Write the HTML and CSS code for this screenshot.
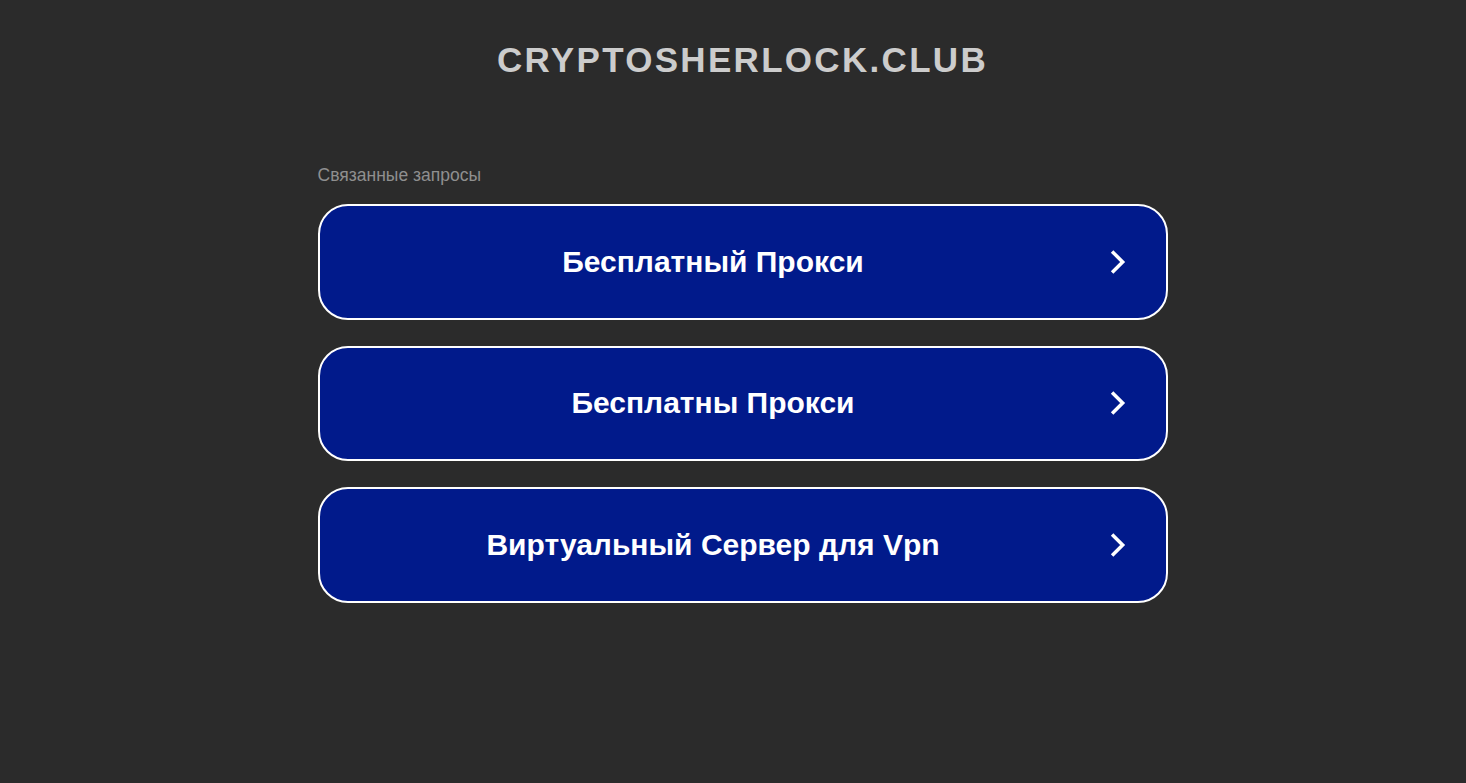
FILE: index.html
```html
<!DOCTYPE html>
<html lang="ru">
<head>
    <meta charset="UTF-8">
    <title>cryptosherlock.club</title>
    <link rel="stylesheet" href="styles.css">
</head>
<body>
    <div class="page">
        <div class="header">
            <h1 class="domain">cryptosherlock.club</h1>
        </div>

        <div class="related">
            <div class="related-title">Связанные запросы</div>
            <div class="links">
                <a class="link" href="#">
                    <span class="link-text">Бесплатный Прокси</span>
                    <svg class="link-arrow" viewBox="0 0 24 24" fill="none" stroke="currentColor" stroke-width="3" stroke-linecap="square">
                        <path d="M8 4l8 8-8 8"></path>
                    </svg>
                </a>
                <a class="link" href="#">
                    <span class="link-text">Бесплатны Прокси</span>
                    <svg class="link-arrow" viewBox="0 0 24 24" fill="none" stroke="currentColor" stroke-width="3" stroke-linecap="square">
                        <path d="M8 4l8 8-8 8"></path>
                    </svg>
                </a>
                <a class="link" href="#">
                    <span class="link-text">Виртуальный Сервер для Vpn</span>
                    <svg class="link-arrow" viewBox="0 0 24 24" fill="none" stroke="currentColor" stroke-width="3" stroke-linecap="square">
                        <path d="M8 4l8 8-8 8"></path>
                    </svg>
                </a>
            </div>
        </div>
    </div>
</body>
</html>
```

FILE: styles.css
```css
html, body {
    margin: 0;
    height: 100%;
}

body {
    background-color: #2b2b2b;
    font-family: "Liberation Sans", Arial, sans-serif;
}

.page {
    display: flex;
    flex-direction: column;
    align-items: center;
    padding-left: 19px;
}

.header {
    padding-top: 40px;
    height: 120px;
    box-sizing: border-box;
}

.domain {
    margin: 0;
    font-size: 35px;
    font-weight: 700;
    letter-spacing: 2.3px;
    text-transform: uppercase;
    color: #cccccc;
    line-height: 40px;
}

.related {
    width: 850px;
    margin-top: 44px;
}

.related-title {
    font-size: 17.5px;
    color: #8f8f8f;
    line-height: 22px;
    margin-bottom: 18px;
}

.links {
    display: flex;
    flex-direction: column;
    gap: 26px;
}

.link {
    display: flex;
    align-items: center;
    height: 115.5px;
    box-sizing: border-box;
    padding: 0 34px 0 30px;
    border: 2px solid #ffffff;
    border-radius: 30px;
    background-color: #011a8b;
    color: #ffffff;
    text-decoration: none;
}

.link-text {
    flex: 1;
    text-align: center;
    font-size: 30px;
    font-weight: 700;
}

.link-arrow {
    width: 28px;
    height: 28px;
    margin-left: 27px;
}
```
